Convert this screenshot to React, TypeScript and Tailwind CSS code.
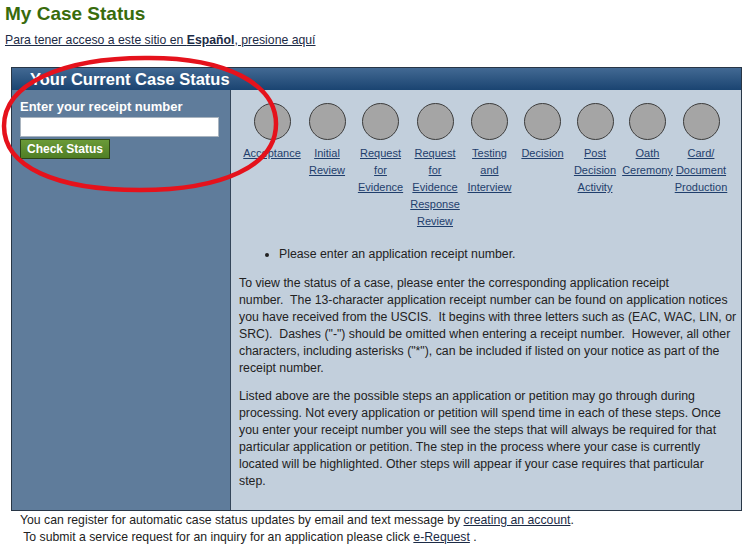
import React from 'react';

// ─── My Case Status ───────────────────────────────────────────────────────────

const steps: { label: string; width: number }[] = [
  { label: 'Acceptance', width: 56 },
  { label: 'Initial Review', width: 54 },
  { label: 'Request for Evidence', width: 53 },
  { label: 'Request for Evidence Response Review', width: 56 },
  { label: 'Testing and Interview', width: 53 },
  { label: 'Decision', width: 53 },
  { label: 'Post Decision Activity', width: 52 },
  { label: 'Oath Ceremony', width: 53 },
  { label: 'Card/ Document Production', width: 54 },
];

function StepRow() {
  return (
    <div className="flex pl-[13px] pt-[13px]">
      {steps.map((s) => (
        <div key={s.label} className="flex flex-col items-center" style={{ width: s.width }}>
          <div className="w-[37px] h-[37px] rounded-full bg-[#a5a5a5] border-[1.5px] border-[#3d3d3d]" />
          <a href="#" className="mt-[5px] w-min text-center text-[11px] leading-[17px] text-[#1f3e6c] underline">
            {s.label}
          </a>
        </div>
      ))}
    </div>
  );
}

export default function App() {
  return (
    <div className="relative w-[755px] h-[551px] overflow-hidden bg-white text-[#222] font-['Liberation_Sans',Arial,sans-serif]">
      <div className="pl-[5px] pt-[3px]">
        <h1 className="text-[19px] leading-[22px] font-bold text-[#386b0c]">My Case Status</h1>
        <a href="#" className="block mt-[7px] text-[12.25px] leading-[17px] text-[#1c2b46] underline">
          Para tener acceso a este sitio en <b>Español</b>, presione aquí
        </a>
      </div>

      {/* Case status box */}
      <div className="ml-[11px] mt-[18px] w-[731px] border border-[#283646]">
        <div className="h-[22px] pl-[18px] bg-gradient-to-b from-[#426993] to-[#1a4471] text-white font-bold text-[16.5px] leading-[22px]">
          Your Current Case Status
        </div>
        <div className="flex h-[420px]">
          {/* Receipt form */}
          <div className="w-[219px] shrink-0 bg-[#5f7c9b] border-r border-[#34465a] pl-[8px] pt-[9px]">
            <p className="text-white font-bold text-[13px] leading-[16px]">Enter your receipt number</p>
            <input
              type="text"
              className="mt-[2px] block w-[199px] h-[20px] bg-white border border-[#a9b4bf] outline-none px-1 text-[12px]"
            />
            <button
              type="button"
              className="mt-[2px] block w-[90px] h-[20px] bg-gradient-to-b from-[#6a9a38] to-[#4f7e25] border border-[#2c4416] text-white font-bold text-[12px] leading-[18px]"
            >
              Check Status
            </button>
          </div>

          {/* Steps and help text */}
          <div className="flex-1 bg-[#c2cfdc]">
            <StepRow />
            <div className="pl-[8px] text-[12.3px] leading-[17px] whitespace-nowrap">
              <ul className="mt-[16px] pl-[40px] list-disc">
                <li>Please enter an application receipt number.</li>
              </ul>
              <p className="mt-[12px]">
                To view the status of a case, please enter the corresponding application receipt
                <br />
                number.&nbsp; The 13-character application receipt number can be found on application notices
                <br />
                you have received from the USCIS.&nbsp; It begins with three letters such as (EAC, WAC, LIN, or
                <br />
                SRC).&nbsp; Dashes ("-") should be omitted when entering a receipt number.&nbsp; However, all other
                <br />
                characters, including asterisks ("*"), can be included if listed on your notice as part of the
                <br />
                receipt number.
              </p>
              <p className="mt-[11px]">
                Listed above are the possible steps an application or petition may go through during
                <br />
                processing. Not every application or petition will spend time in each of these steps. Once
                <br />
                you enter your receipt number you will see the steps that will always be required for that
                <br />
                particular application or petition. The step in the process where your case is currently
                <br />
                located will be highlighted. Other steps will appear if your case requires that particular
                <br />
                step.
              </p>
            </div>
          </div>
        </div>
      </div>

      {/* Footer notes */}
      <div className="pl-[20px] pt-[1px] text-[12.25px] leading-[17px] whitespace-pre">
        <p>
          You can register for automatic case status updates by email and text message by{' '}
          <a href="#" className="text-[#1c2b46] underline">creating an account</a>.
        </p>
        <p>
          {' To submit a service request for an inquiry for an application please click '}
          <a href="#" className="text-[#1c2b46] underline">e-Request</a>
          {' .'}
        </p>
      </div>

      {/* Red hand-drawn ellipse annotation */}
      <svg className="absolute left-0 top-0 pointer-events-none" width="755" height="551">
        <path
          d="M145 58 C226 57, 276 84, 276 124 C276 166, 222 190, 140 190 C56 190, 4 167, 4 126 C4 84, 62 58, 145 58 Z"
          fill="none"
          stroke="#e5121c"
          strokeWidth="4.5"
        />
      </svg>
    </div>
  );
}
